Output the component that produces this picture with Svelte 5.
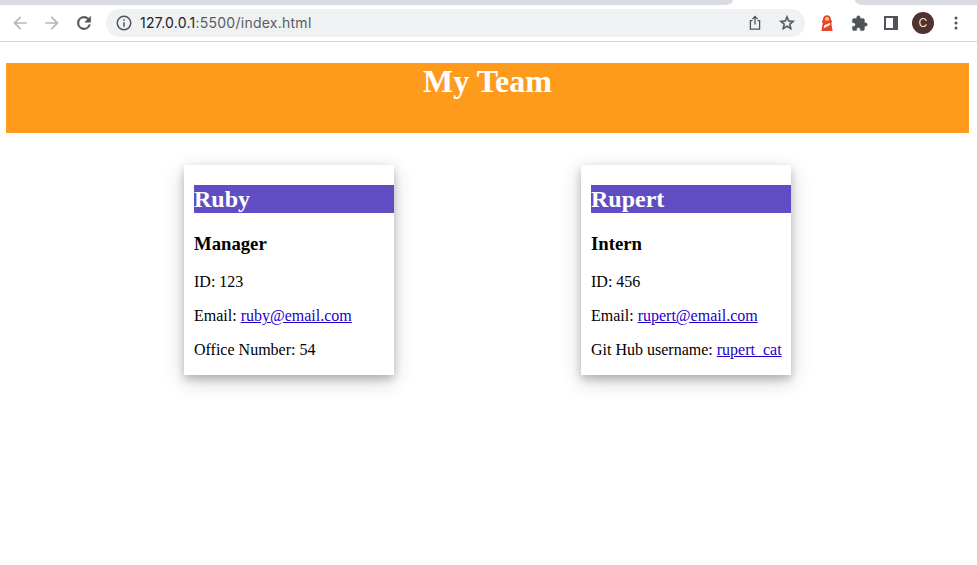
<script>
  const team = [
    {
      name: 'Ruby',
      role: 'Manager',
      id: '123',
      email: 'ruby@email.com',
      extra: 'Office Number: ',
      value: '54',
      link: false
    },
    {
      name: 'Rupert',
      role: 'Intern',
      id: '456',
      email: 'rupert@email.com',
      extra: 'Git Hub username: ',
      value: 'rupert_cat',
      link: true
    }
  ];
</script>

<div class="window">
  <div class="tabs">
    <div class="tab before"></div>
    <div class="tab after"></div>
  </div>
  <div class="toolbar">
    <div class="nav">
      <svg class="muted" width="20" height="20" viewBox="0 0 24 24"><path d="M20 11H7.83l5.59-5.59L12 4l-8 8 8 8 1.41-1.41L7.83 13H20z" /></svg>
      <svg class="muted" width="20" height="20" viewBox="0 0 24 24"><path d="M12 4l-1.41 1.41L16.17 11H4v2h12.17l-5.58 5.59L12 20l8-8z" /></svg>
      <svg class="reload" width="20" height="20" viewBox="0 0 24 24"><path d="M17.65 6.35A7.96 7.96 0 0 0 12 4a8 8 0 1 0 7.73 10h-2.08A6 6 0 1 1 12 6c1.66 0 3.14.69 4.22 1.78L13 11h7V4z" /></svg>
    </div>
    <div class="address">
      <svg width="18" height="18" viewBox="0 0 24 24"><path d="M11 7h2v2h-2zm0 4h2v6h-2zm1-9a10 10 0 1 0 0 20 10 10 0 0 0 0-20zm0 18a8 8 0 1 1 0-16 8 8 0 0 1 0 16z" /></svg>
      <span class="url"><b>127.0.0.1</b>:5500/index.html</span>
      <svg class="share" width="18" height="18" viewBox="0 0 18 18"><path fill="none" stroke="currentColor" stroke-width="1.3" d="M6.5 6.6H4.4v8.6h9.2V6.6h-2.1M9 10.5V2.8M6.4 5.1 9 2.5l2.6 2.6" /></svg>
      <svg class="star" width="18" height="18" viewBox="0 0 24 24"><path d="M22 9.24l-7.19-.62L12 2 9.19 8.63 2 9.24l5.46 4.73L5.82 21 12 17.27 18.18 21l-1.63-7.03zM12 15.4l-3.76 2.27 1-4.28-3.32-2.88 4.38-.38L12 6.1l1.71 4.04 4.38.38-3.32 2.88 1 4.28z" /></svg>
    </div>
    <div class="actions">
      <svg width="14" height="18" viewBox="0 0 14 18">
        <path fill="#e9452b" d="M3 5.2C3.2 2.6 4.8 1.2 7 1.2s3.8 1.4 4 4v1.2h1v2h-.8L12.6 17H1.4l1.4-8.6H2v-2h1z" />
        <path fill="#ffcc70" d="M5 6.4V5c0-1.2.8-2 2-2s2 .8 2 2v1.4z" />
        <path fill="#fff" d="m4.2 11.2 5.5-2.1.3 2-6.2 3.2z" />
      </svg>
      <svg class="puzzle" width="17" height="17" viewBox="0 0 24 24"><path d="M20.5 11H19V7c0-1.1-.9-2-2-2h-4V3.5a2.5 2.5 0 0 0-5 0V5H4c-1.1 0-1.99.9-1.99 2v3.8H3.5a2.7 2.7 0 0 1 0 5.4H2V20c0 1.1.9 2 2 2h3.8v-1.5a2.7 2.7 0 0 1 5.4 0V22H17c1.1 0 2-.9 2-2v-4h1.5a2.5 2.5 0 0 0 0-5z" /></svg>
      <svg width="14" height="14" viewBox="0 0 14 14"><path fill-rule="evenodd" d="M0 0h14v14H0zM2 2v10h7V2z" /></svg>
      <span class="avatar">C</span>
      <svg class="more" width="4" height="14" viewBox="0 0 4 14"><circle cx="2" cy="2" r="1.5" /><circle cx="2" cy="7" r="1.5" /><circle cx="2" cy="12" r="1.5" /></svg>
    </div>
  </div>

  <main>
    <header><h1>My Team</h1></header>
    <section>
      {#each team as person}
        <article>
          <h2>{person.name}</h2>
          <h3>{person.role}</h3>
          <p>ID: {person.id}</p>
          <p>Email: <a href="mailto:{person.email}">{person.email}</a></p>
          <p>{person.extra}{#if person.link}<a href="#profile">{person.value}</a>{:else}{person.value}{/if}</p>
        </article>
      {/each}
    </section>
  </main>
</div>

<style>
  .window {
    width: 977px;
    height: 565px;
    overflow: hidden;
    background: #fff;
    font-family: "Liberation Serif", "Times New Roman", serif;
    color: #000;
  }
  .tabs {
    display: flex;
    justify-content: space-between;
    height: 5px;
  }
  .tab {
    background: #d9dce2;
  }
  .before {
    width: 733px;
    border-bottom-right-radius: 7px 5px;
  }
  .after {
    width: 122px;
    border-bottom-left-radius: 7px 5px;
  }
  .toolbar {
    box-sizing: border-box;
    height: 37px;
    display: flex;
    align-items: center;
    border-bottom: 1px solid #d5d6d8;
    color: #505358;
    font-family: Inter, sans-serif;
  }
  svg {
    display: block;
    flex: none;
    fill: currentColor;
  }
  .nav {
    display: flex;
    align-items: center;
    gap: 12px;
    width: 96px;
    padding-left: 10px;
  }
  .nav .muted {
    color: #b6b7ba;
  }
  .reload path,
  .star path,
  .puzzle path {
    stroke: currentColor;
    stroke-width: 0.6;
  }
  .address {
    box-sizing: border-box;
    width: 699px;
    height: 28px;
    padding: 0 9px;
    border-radius: 14px;
    background: #eff1f3;
    display: flex;
    align-items: center;
  }
  .url {
    margin-left: 7px;
    font-size: 14px;
    line-height: 20px;
    letter-spacing: 0.25px;
    white-space: nowrap;
    color: #5a5d61;
  }
  .url b {
    font-weight: 400;
    color: #202124;
  }
  .share {
    margin-left: auto;
  }
  .star {
    margin-left: 14px;
  }
  .actions {
    display: flex;
    align-items: center;
    padding-left: 15px;
    gap: 16px;
  }
  .actions .puzzle {
    margin-left: 1px;
  }
  .avatar {
    width: 22px;
    height: 22px;
    margin-left: -2px;
    border-radius: 50%;
    background: #50332e;
    color: #eee5e2;
    font-size: 12px;
    line-height: 22px;
    text-align: center;
  }
  .more {
    margin-left: 4px;
  }
  main {
    padding: 21px 8px 0 6px;
  }
  header {
    height: 70px;
    background: #ff9b1c;
    color: #fff;
    text-align: center;
  }
  h1 {
    margin: 0;
    font-size: 32px;
    line-height: 37px;
  }
  section {
    display: flex;
    gap: 187px;
    padding: 32px 0 0 178px;
  }
  article {
    box-sizing: border-box;
    width: 210px;
    height: 210px;
    padding: 20px 0 0 10px;
    background: #fff;
    box-shadow: 0 4px 8px rgba(0, 0, 0, 0.2), 0 6px 20px rgba(0, 0, 0, 0.19);
  }
  h2 {
    margin: 0 0 20px;
    font-size: 24px;
    line-height: 28px;
    background: #604dc3;
    color: #fff;
  }
  h3 {
    margin: 0 0 19px;
    font-size: 18.72px;
    line-height: 21px;
  }
  p {
    margin: 0 0 16px;
    font-size: 16px;
    line-height: 18px;
    white-space: nowrap;
  }
  a {
    color: #1f00c8;
  }
</style>
